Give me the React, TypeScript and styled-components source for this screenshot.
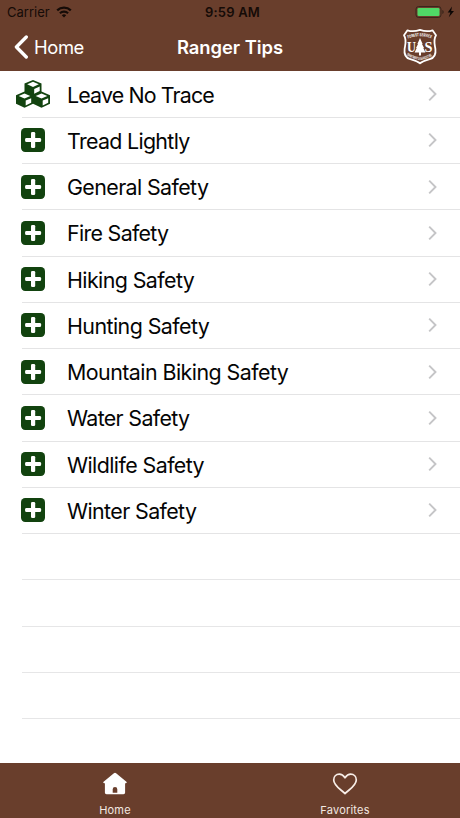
import React from 'react'
import styled, { createGlobalStyle } from 'styled-components'

type Tip = {
  label: string
  cubes?: boolean
  spacing?: number
}

const tips: Tip[] = [
  { label: 'Leave No Trace', cubes: true, spacing: -0.85 },
  { label: 'Tread Lightly', spacing: -0.68 },
  { label: 'General Safety', spacing: -0.6 },
  { label: 'Fire Safety', spacing: -0.68 },
  { label: 'Hiking Safety', spacing: -0.58 },
  { label: 'Hunting Safety', spacing: -0.56 },
  { label: 'Mountain Biking Safety', spacing: -0.54 },
  { label: 'Water Safety', spacing: -0.66 },
  { label: 'Wildlife Safety', spacing: -0.57 },
  { label: 'Winter Safety', spacing: -0.6 },
]

const emptyRows = [0, 1, 2, 3]

const GlobalStyle = createGlobalStyle`
  * { box-sizing: border-box; }
  body {
    margin: 0;
    background: #fff;
    font-family: Inter, 'Liberation Sans', sans-serif;
  }
`

const Screen = styled.div`
  display: flex;
  flex-direction: column;
  width: 460px;
  height: 818px;
  overflow: hidden;
  background: #fff;
`

const Header = styled.header`
  flex: none;
  height: 71px;
  background: #693e2c;
`

const StatusBar = styled.div`
  display: grid;
  grid-template-columns: 1fr auto 1fr;
  align-items: center;
  height: 24px;
  padding: 0 5px 0 7px;
  color: #150b07;
  font-size: 13px;
  line-height: 24px;
`

const Carrier = styled.div`
  display: flex;
  align-items: center;
  gap: 6px;
`

const Clock = styled.div`
  padding-left: 3px;
  font-weight: 600;
  letter-spacing: 0.2px;
`

const Power = styled.div`
  display: flex;
  align-items: center;
  justify-content: flex-end;
`

const Toolbar = styled.div`
  display: grid;
  grid-template-columns: 1fr auto 1fr;
  align-items: center;
  height: 46px;
  padding: 0 14px;
  color: #fff;
`

const BackButton = styled.button`
  display: flex;
  align-items: center;
  gap: 5px;
  padding: 0;
  border: 0;
  background: none;
  color: #fff;
  font: 400 18.4px Inter, sans-serif;
  letter-spacing: -0.4px;
`

const Title = styled.h1`
  margin: 0;
  font-size: 18.4px;
  font-weight: 600;
  letter-spacing: -0.05px;
`

const LogoSlot = styled.div`
  display: flex;
  justify-content: flex-end;
  padding-right: 8px;
`

const List = styled.ul`
  flex: 1;
  margin: 0;
  padding: 0.6px 0 0;
  list-style: none;
`

const Row = styled.li`
  display: flex;
  height: 46.25px;
`

const IconCell = styled.div`
  display: flex;
  align-items: center;
  justify-content: center;
  width: 66px;
  height: 45.25px;
  margin-right: -44px;
`

const RowBody = styled.div`
  display: flex;
  flex: 1;
  align-items: center;
  justify-content: space-between;
  padding: 0 21px 0 45px;
  border-bottom: 1px solid #e4e4e5;
`

const EmptyRow = styled.li`
  height: 46.25px;
  margin-left: 22px;
  border-bottom: 1px solid #e6e6e7;
`

const Label = styled.span<{ $spacing: number }>`
  padding-top: 1px;
  color: #050505;
  font-size: 21.4px;
  line-height: 30px;
  letter-spacing: ${({ $spacing }) => $spacing}px;
  white-space: nowrap;
`

const TabBar = styled.nav`
  display: grid;
  grid-template-columns: 1fr 1fr;
  flex: none;
  height: 55px;
  background: #693e2c;
`

const Tab = styled.div`
  display: flex;
  flex-direction: column;
  align-items: center;
  gap: 6px;
  padding-top: 9px;
  font-size: 11px;
  line-height: 16px;
  letter-spacing: 0.2px;
`

const TabLabel = styled.span`
  color: #f3e8e1;
`

const Wifi = () => (
  <svg width="16" height="12" viewBox="0 0 16 12" fill="none" stroke="currentColor">
    <path d="M1.2 4.4a9.8 9.8 0 0 1 13.6 0" strokeWidth="2.3" />
    <path d="M3.9 7.3a5.9 5.9 0 0 1 8.2 0" strokeWidth="2.1" />
    <path d="M8 11.4 5.8 9.2a3.2 3.2 0 0 1 4.4 0z" fill="currentColor" stroke="none" />
  </svg>
)

const Battery = () => (
  <svg width="40" height="14" viewBox="0 0 40 14">
    <rect x="1" y="1.5" width="25" height="11" rx="2.6" fill="none" stroke="#3a251b" />
    <rect x="2.5" y="3" width="22" height="8" rx="1.2" fill="#50d866" />
    <path d="M27.3 5v4c.9-.3 1.4-1 1.4-2s-.5-1.7-1.4-2z" fill="#3a251b" />
    <path d="M37 1.5 32.7 7.6h2.7L33.8 12.3 39 6H36.2z" fill="#0b0604" />
  </svg>
)

const BackArrow = () => (
  <svg width="15" height="24" viewBox="0 0 15 24">
    <path
      d="M12.300 2 2.400 12l9.900 10"
      fill="none"
      stroke="#fff"
      strokeWidth="3.3"
      strokeLinecap="round"
      strokeLinejoin="round"
    />
  </svg>
)

const Chevron = () => (
  <svg width="12" height="16" viewBox="0 0 12 16">
    <path d="m2.200 1.700 6.300 6.300-6.300 6.300" fill="none" stroke="#c5c5c7" strokeWidth="1.9" />
  </svg>
)

const Cube: React.FC<{ x: number; y: number }> = ({ x, y }) => (
  <g transform={`translate(${x} ${y})`}>
    <path d="M8.500 0 17 3.600v8.600L8.500 16.200 0 12.200V3.600z" fill="#12430f" />
    <path d="m8.500 1.800 5.800 2.500-5.800 2.600-5.800-2.600z" fill="#fff" />
    <path d="m9.700 9 5.500-2.400v4.500l-5.500 2.700z" fill="#fff" />
  </g>
)

const Cubes = () => (
  <svg width="34" height="28" viewBox="0 0 34 28">
    <Cube x={8.5} y={0} />
    <Cube x={0} y={11.6} />
    <Cube x={17} y={11.6} />
  </svg>
)

const Plus = () => (
  <svg width="24" height="24" viewBox="0 0 24 24">
    <rect width="24" height="24" rx="4.2" fill="#12430f" />
    <rect x="10" y="4" width="4.2" height="16" rx="1.3" fill="#fff" />
    <rect x="4.100" y="9.900" width="16" height="4.200" rx="1.3" fill="#fff" />
  </svg>
)

const Shield = () => (
  <svg width="36" height="38" viewBox="0 0 36 38">
    <path
      d="M5.500 2.300c4.200 1.500 8.500 1 12.500-.5 4 1.500 8.300 2 12.500.5L34 7.300c-3 4.700-1.200 9.200-.6 13.700.7 5.300-1.200 8.900-5.700 10.200-3.500 1-6.800 1.800-9.700 4.100-2.900-2.300-6.200-3.100-9.700-4.100-4.500-1.300-6.400-4.900-5.700-10.200.6-4.500 2.400-9-.6-13.700z"
      fill="none"
      stroke="#fff"
      strokeWidth="1.8"
      strokeLinejoin="round"
    />
    <path id="crest-top" d="M6 10.500Q18 6 30 10.500" fill="none" />
    <path id="crest-bottom" d="M4.500 27Q9 30.500 18 32.300Q27 30.500 31.500 27" fill="none" />
    <text fill="#fff" fontSize="4.200" fontWeight="700">
      <textPath href="#crest-top" textLength="24" lengthAdjust="spacingAndGlyphs">FOREST SERVICE</textPath>
    </text>
    <text fill="#fff" fontSize="3.800" fontWeight="700">
      <textPath href="#crest-bottom" textLength="27.5" lengthAdjust="spacingAndGlyphs">DEPARTMENT OF AGRICULTURE</textPath>
    </text>
    <g fill="#fff" fontSize="15" fontWeight="700" fontFamily="Liberation Serif, serif">
      <text x="5" y="24" textLength="9" lengthAdjust="spacingAndGlyphs">U</text>
      <text x="22.5" y="24" textLength="8" lengthAdjust="spacingAndGlyphs">S</text>
    </g>
    <path d="m18 10 2.600 6-.6-.1 2 4.200-.7-.1 2.100 4.400h-4.400v3.100h-2v-3.100h-4.400l2.100-4.400-.7.1 2-4.200-.6.1z" fill="#fff" />
  </svg>
)

const HomeIcon = () => (
  <svg width="26" height="24" viewBox="0 0 26 24">
    <path
      fillRule="evenodd"
      d="M11.900 1.200a1.700 1.700 0 0 1 2.200 0l10.300 8.500c.7.600.3 1.500-.6 1.500h-.7v9.300c0 1-.7 1.700-1.700 1.700H4.600c-1 0-1.700-.7-1.700-1.700v-9.300h-.7c-.9 0-1.300-.9-.6-1.500zM10.700 20.700h4.600v-3.500a2.300 2.300 0 0 0-4.600 0z"
      fill="#fff"
    />
  </svg>
)

const HeartIcon = () => (
  <svg width="26" height="24" viewBox="0 0 26 24">
    <path
      d="M13 5.800C11.300 3.300 9.400 2.200 7.300 2.200c-3.200 0-5.600 2.500-5.600 5.700 0 5.600 7.100 9.600 11.300 13.700 4.200-4.100 11.300-8.100 11.300-13.700 0-3.200-2.400-5.700-5.600-5.700-2.100 0-4 1.100-5.700 3.600z"
      fill="none"
      stroke="#f8eee8"
      strokeWidth="1.7"
      strokeLinejoin="round"
    />
  </svg>
)

const TipRow: React.FC<Tip> = ({ label, cubes, spacing = -0.6 }) => (
  <Row>
    <IconCell>{cubes ? <Cubes /> : <Plus />}</IconCell>
    <RowBody>
      <Label $spacing={spacing}>{label}</Label>
      <Chevron />
    </RowBody>
  </Row>
)

const App: React.FC = () => (
  <>
    <GlobalStyle />
    <Screen>
      <Header>
        <StatusBar>
          <Carrier>
            Carrier
            <Wifi />
          </Carrier>
          <Clock>9:59 AM</Clock>
          <Power>
            <Battery />
          </Power>
        </StatusBar>
        <Toolbar>
          <BackButton>
            <BackArrow />
            Home
          </BackButton>
          <Title>Ranger Tips</Title>
          <LogoSlot>
            <Shield />
          </LogoSlot>
        </Toolbar>
      </Header>
      <List>
        {tips.map((tip) => (
          <TipRow key={tip.label} {...tip} />
        ))}
        {emptyRows.map((row) => (
          <EmptyRow key={row} />
        ))}
      </List>
      <TabBar>
        <Tab>
          <HomeIcon />
          <TabLabel>Home</TabLabel>
        </Tab>
        <Tab>
          <HeartIcon />
          <TabLabel>Favorites</TabLabel>
        </Tab>
      </TabBar>
    </Screen>
  </>
)

export default App
